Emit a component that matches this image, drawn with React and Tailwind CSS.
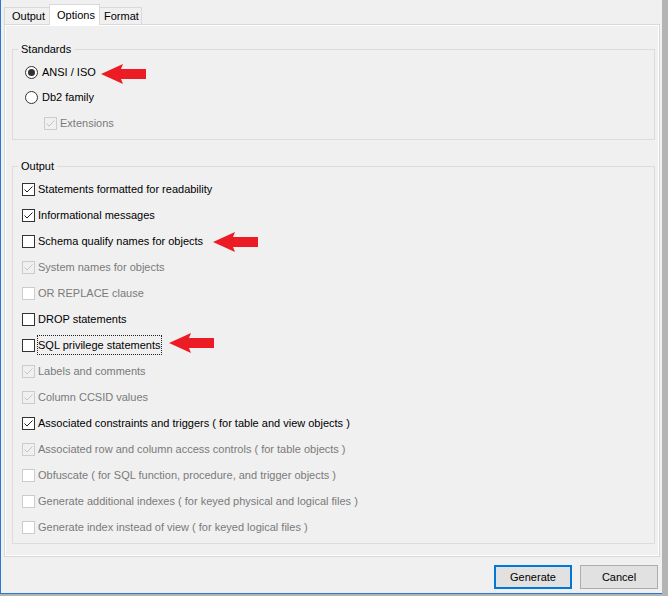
import React from "react";

const rows = [
  { label: "Statements formatted for readability", checked: true, disabled: false },
  { label: "Informational messages", checked: true, disabled: false },
  { label: "Schema qualify names for objects", checked: false, disabled: false },
  { label: "System names for objects", checked: true, disabled: true },
  { label: "OR REPLACE clause", checked: false, disabled: true },
  { label: "DROP statements", checked: false, disabled: false },
  { label: "SQL privilege statements", checked: false, disabled: false, focus: true },
  { label: "Labels and comments", checked: true, disabled: true },
  { label: "Column CCSID values", checked: true, disabled: true },
  { label: "Associated constraints and triggers ( for table and view objects )", checked: true, disabled: false },
  { label: "Associated row and column access controls ( for table objects )", checked: true, disabled: true },
  { label: "Obfuscate ( for SQL function, procedure, and trigger objects )", checked: false, disabled: true },
  { label: "Generate additional indexes ( for keyed physical and logical files )", checked: false, disabled: true },
  { label: "Generate index instead of view ( for keyed logical files )", checked: false, disabled: true },
];

function CheckBox({ checked, disabled }) {
  let cls = "w-[13px] h-[13px] border shrink-0 flex items-center justify-center ";
  if (disabled && checked) cls += "border-[#cccccc] bg-[#f0f0f0]";
  else if (disabled) cls += "border-[#cccccc] bg-white";
  else cls += "border-[#333333] bg-white";
  return (
    <span className={cls}>
      {checked && (
        <svg width="11" height="11" viewBox="0 0 11 11">
          <path
            d="M1.5 5.5 L4 8 L9.5 2.5"
            fill="none"
            stroke={disabled ? "#c4c4c4" : "#222222"}
            strokeWidth="1"
          />
        </svg>
      )}
    </span>
  );
}

function Radio({ selected }) {
  return (
    <span className="w-[13px] h-[13px] rounded-full border border-[#333333] bg-white shrink-0 flex items-center justify-center">
      {selected && <span className="w-[7px] h-[7px] rounded-full bg-[#333333]" />}
    </span>
  );
}

function Arrow({ className }) {
  return (
    <svg className={className} width="45" height="20" viewBox="0 0 45 20">
      <polygon
        points="0,10 22,0 20,5 45,5 45,15 20,15 22,20"
        fill="#ec1c24"
      />
    </svg>
  );
}

function Group({ title, children, className }) {
  return (
    <div className={"relative border border-[#dcdcdc] " + className}>
      <span className="absolute left-[5px] -top-[9px] px-[3px] bg-[#f0f0f0] leading-[16px] text-black">
        {title}
      </span>
      {children}
    </div>
  );
}

export default function App() {
  return (
    <div className="relative w-[668px] h-[596px] bg-[#b4b4b4] overflow-hidden font-['Liberation_Sans',Arial,sans-serif] text-[11px] text-black">
      <div className="w-[662px] h-[594px] bg-[#f0f0f0] border-l border-b border-[#2b78d4] flex flex-col">
        {/* Tabs */}
        <div className="h-[24px] flex items-end pl-[3px] shrink-0">
          <div className="w-[46px] h-[17px] border-t border-l border-r border-[#d9d9d9] bg-[#f0f0f0] pl-[7px] flex items-center leading-none">
            Output
          </div>
          <div className="relative z-10 -ml-px -mb-px w-[51px] h-[21px] border-t border-l border-r border-[#d9d9d9] bg-white pl-[7px] flex items-center leading-none">
            Options
          </div>
          <div className="-ml-px w-[43px] h-[17px] border-t border-l border-r border-[#d9d9d9] bg-[#f0f0f0] pl-[4px] flex items-center leading-none">
            Format
          </div>
        </div>

        {/* Tab page */}
        <div className="ml-[3px] w-[656px] h-[533px] border border-[#d9d9d9] shrink-0">
          <div className="h-full border border-white flex flex-col">
            <Group title="Standards" className="mt-[23px] ml-[6px] mr-[3px] pt-[10px] pb-[3px] pl-[12px]">
              <div className="h-[25px] flex items-center">
                <Radio selected />
                <span className="ml-[4px]">ANSI / ISO</span>
              </div>
              <div className="h-[25px] flex items-center">
                <Radio />
                <span className="ml-[4px]">Db2 family</span>
              </div>
              <div className="mt-px h-[25px] flex items-center pl-[19px]">
                <CheckBox checked disabled />
                <span className="ml-[3px] text-[#7a7a7a]">Extensions</span>
              </div>
            </Group>

            <Group title="Output" className="mt-[26px] ml-[6px] mr-[3px] pt-[9px] pb-[3px] pl-[9px]">
              {rows.map((r) => (
                <div key={r.label} className="h-[26px] flex items-center">
                  <CheckBox checked={r.checked} disabled={r.disabled} />
                  {r.focus ? (
                    <span className="ml-[2px] h-[20px] pr-[1px] border border-dotted border-[#222222] flex items-center">
                      {r.label}
                    </span>
                  ) : (
                    <span className={r.disabled ? "ml-[3px] text-[#7a7a7a]" : "ml-[3px]"}>
                      {r.label}
                    </span>
                  )}
                </div>
              ))}
            </Group>
          </div>
        </div>

        {/* Buttons */}
        <div className="mt-[8px] flex justify-end gap-[8px] pr-[4px]">
          <button className="w-[78px] h-[24px] border-2 border-[#0078d7] bg-[#e1e1e1] text-black flex items-center justify-center leading-none">
            Generate
          </button>
          <button className="w-[78px] h-[24px] border border-[#adadad] bg-[#e1e1e1] text-black flex items-center justify-center leading-none">
            Cancel
          </button>
        </div>
      </div>

      {/* Annotation arrows */}
      <Arrow className="absolute left-[101px] top-[64px]" />
      <Arrow className="absolute left-[213px] top-[232px]" />
      <Arrow className="absolute left-[169px] top-[333px]" />
    </div>
  );
}
